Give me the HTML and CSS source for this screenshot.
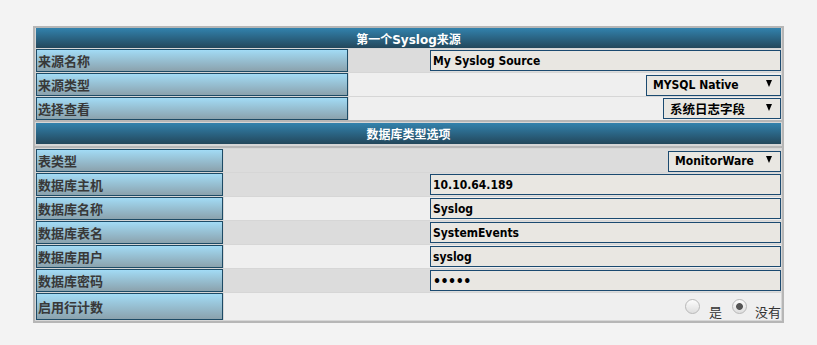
FILE: index.html
```html
<!DOCTYPE html>
<html lang="zh-CN">
<head>
<meta charset="utf-8">
<title>Syslog 来源</title>
<link rel="stylesheet" href="styles.css">
</head>
<body>
<div class="frame">
  <div class="head">第一个Syslog来源</div>
  <div class="row">
    <div class="lbl lbl-wide">来源名称</div>
    <div class="val dark"><input class="txt" type="text" value="My Syslog Source"></div>
  </div>
  <div class="row">
    <div class="lbl lbl-wide">来源类型</div>
    <div class="val light"><span class="sel"><select class="w135"><option>MYSQL Native</option></select></span></div>
  </div>
  <div class="row">
    <div class="lbl lbl-wide">选择查看</div>
    <div class="val light"><span class="sel"><select class="w118 cjk"><option>系统日志字段</option></select></span></div>
  </div>
  <div class="rule"></div>
  <div class="head head-2">数据库类型选项</div>
  <div class="rule rule-2"></div>
  <div class="row">
    <div class="lbl lbl-narrow">表类型</div>
    <div class="val dark"><span class="sel"><select class="w113"><option>MonitorWare</option></select></span></div>
  </div>
  <div class="row">
    <div class="lbl lbl-narrow">数据库主机</div>
    <div class="val dark"><input class="txt" type="text" value="10.10.64.189"></div>
  </div>
  <div class="row">
    <div class="lbl lbl-narrow">数据库名称</div>
    <div class="val light"><input class="txt" type="text" value="Syslog"></div>
  </div>
  <div class="row">
    <div class="lbl lbl-narrow">数据库表名</div>
    <div class="val dark"><input class="txt" type="text" value="SystemEvents"></div>
  </div>
  <div class="row">
    <div class="lbl lbl-narrow">数据库用户</div>
    <div class="val light"><input class="txt" type="text" value="syslog"></div>
  </div>
  <div class="row">
    <div class="lbl lbl-narrow">数据库密码</div>
    <div class="val dark"><input class="txt pw" type="password" value="12345"></div>
  </div>
  <div class="row row-tall">
    <div class="lbl lbl-narrow">启用行计数</div>
    <div class="val light radios">
      <input class="radio r-yes" type="radio" name="rowcount" id="rc-yes">
      <label class="rlabel" for="rc-yes">是</label>
      <input class="radio r-no" type="radio" name="rowcount" id="rc-no" checked>
      <label class="rlabel" for="rc-no">没有</label>
    </div>
  </div>
</div>
</body>
</html>
```

FILE: styles.css
```css
body {
  margin: 0;
  background: #f3f3f3;
  font-family: "DejaVu Sans", "Noto Sans CJK SC", sans-serif;
}

.frame {
  margin: 26px 0 0 33px;
  width: 745px;
  padding: 0 1px 1px;
  border: 2px solid #b6b6b6;
  background: #d6d6d6;
}

.head {
  height: 20px;
  display: flex;
  align-items: center;
  justify-content: center;
  color: #fff;
  font-weight: bold;
  font-size: 12px;
  font-family: "DejaVu Sans", "Noto Sans CJK SC", sans-serif;
  background: linear-gradient(#3282ad, #23475b);
}

.head-2 {
  height: 21px;
  margin-top: 1px;
}

.rule {
  height: 2px;
  margin: 0 -1px;
  background: #b6b6b6;
}

.rule-2 {
  margin-top: 2px;
}

.row {
  display: flex;
  gap: 1px;
  margin-top: 1px;
  height: 23px;
}

.row-tall {
  height: 27px;
}

.lbl {
  box-sizing: border-box;
  border: 1px solid #1d4b66;
  background: linear-gradient(#a2dbf5, #8ba2ad);
  font-family: "Noto Sans CJK SC", sans-serif;
  font-weight: bold;
  font-size: 13px;
  color: #383838;
  display: flex;
  align-items: center;
  padding: 0 0 0 1px;
}

.lbl-wide {
  width: 312px;
}

.lbl-narrow {
  width: 187px;
}

.val {
  flex: 1;
  display: flex;
  justify-content: flex-end;
  align-items: center;
}

.dark {
  background: #dcdcdc;
}

.light {
  background: #efefef;
}

.txt {
  box-sizing: border-box;
  width: 351px;
  height: 21px;
  margin: 0;
  padding: 0 2px;
  border: 1px solid #1b4a70;
  border-radius: 0;
  background: #e9e7e2;
  color: #000;
  font-family: "DejaVu Sans Condensed", "DejaVu Sans", sans-serif;
  font-stretch: condensed;
  font-weight: bold;
  font-size: 12px;
  outline: none;
}

.txt.pw {
  font-size: 14px;
  letter-spacing: -0.5px;
}

.sel {
  position: relative;
  display: block;
  height: 21px;
}

.sel::after {
  content: "";
  position: absolute;
  right: 9px;
  top: 6px;
  width: 0;
  height: 0;
  border-left: 3.5px solid transparent;
  border-right: 3.5px solid transparent;
  border-top: 7px solid #000;
}

.sel select {
  appearance: none;
  -webkit-appearance: none;
  box-sizing: border-box;
  height: 21px;
  margin: 0;
  padding: 0 0 0 6px;
  border: 1px solid #1b4a70;
  border-radius: 0;
  background: #e9e7e2;
  color: #000;
  font-family: "DejaVu Sans Condensed", "DejaVu Sans", "Noto Sans CJK SC", sans-serif;
  font-stretch: condensed;
  font-weight: bold;
  font-size: 12px;
  outline: none;
}

.sel select.cjk {
  font-family: "Noto Sans CJK SC", sans-serif;
  font-weight: bold;
  font-size: 12.5px;
}

.w135 { width: 135px; }
.w118 { width: 118px; }
.w113 { width: 113px; }

.radio {
  appearance: none;
  -webkit-appearance: none;
  box-sizing: border-box;
  width: 15px;
  height: 15px;
  margin: 0;
  border-radius: 50%;
  border: 1px solid #b8b8b8;
  background: linear-gradient(#fcfcfc, #dedede);
}

.radio:checked {
  background: radial-gradient(circle, #555 0 3px, rgba(85, 85, 85, 0) 3.8px), linear-gradient(#fcfcfc, #dedede);
}

.r-yes {
  margin-right: 9px;
}

.r-no {
  margin-left: 10px;
  margin-right: 8px;
}

.rlabel {
  font-family: "Noto Sans CJK SC", sans-serif;
  font-size: 13px;
  color: #333;
  margin-top: 11px;
  line-height: 16px;
}
```
